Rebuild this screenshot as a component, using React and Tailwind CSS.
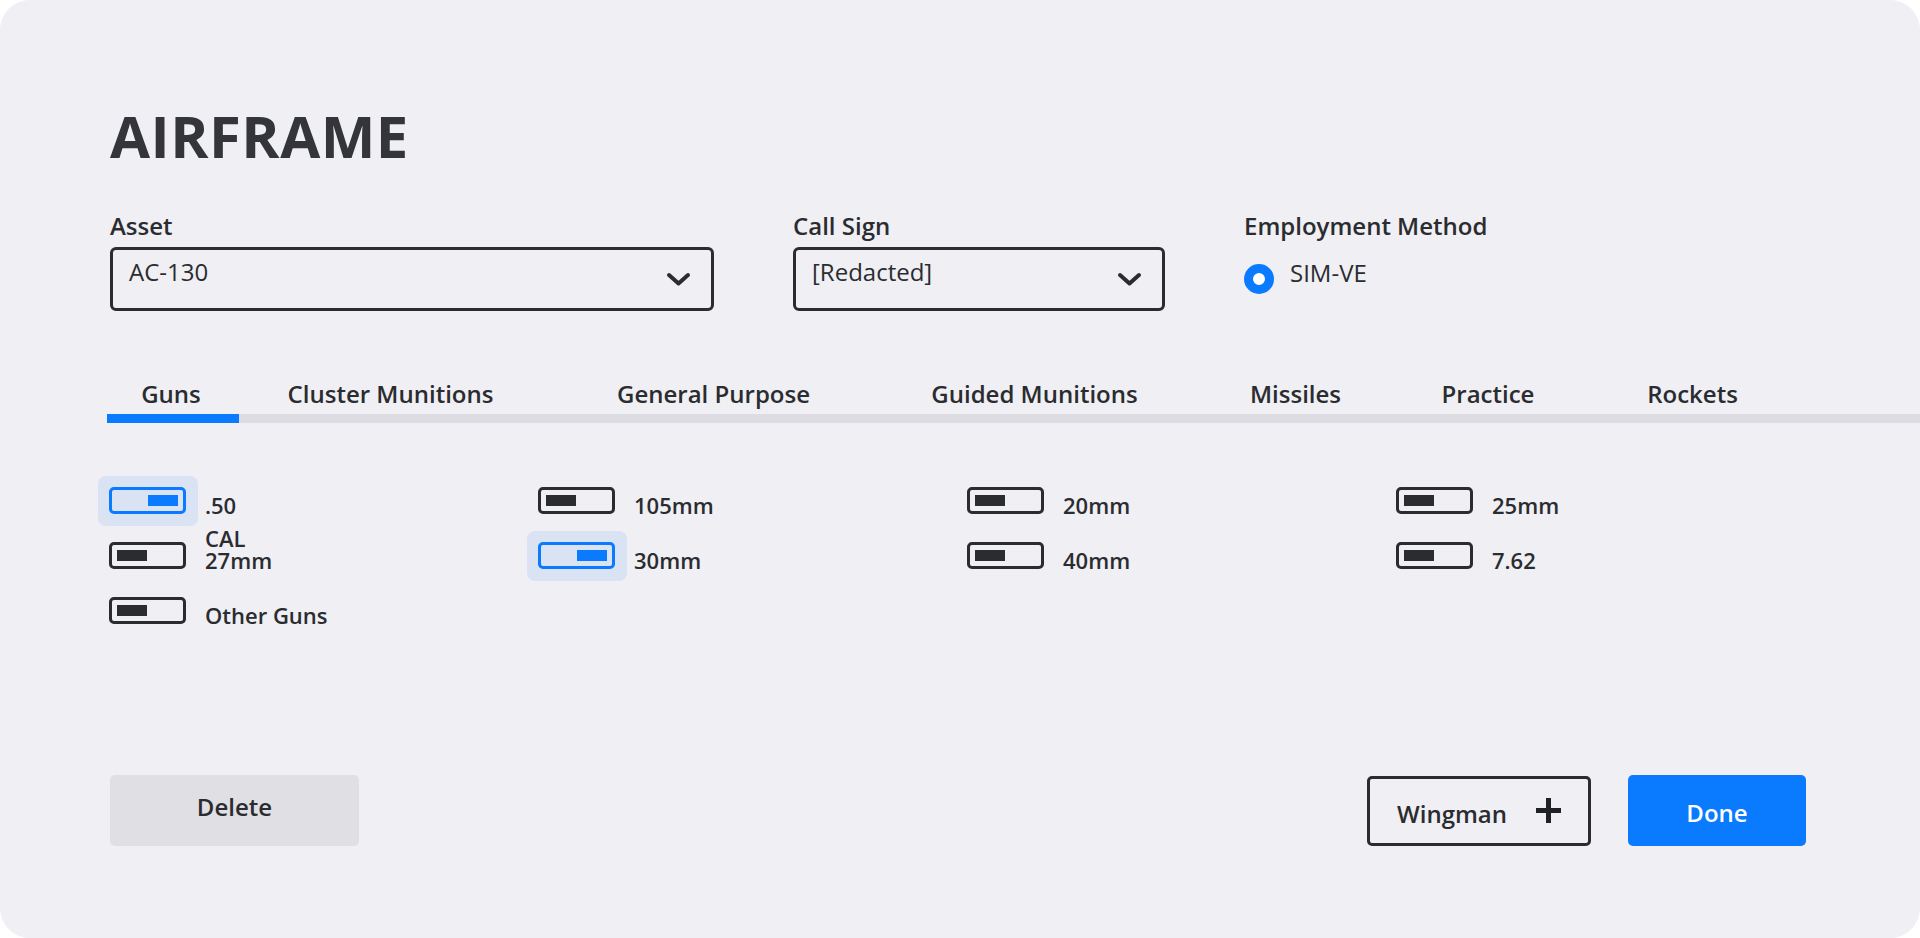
import { useState } from "react";

const TABS = [
    { label: "Guns", w: "w-[132px]" },
    { label: "Cluster Munitions", w: "w-[307px]" },
    { label: "General Purpose", w: "w-[339px]" },
    { label: "Guided Munitions", w: "w-[303px]" },
    { label: "Missiles", w: "w-[219px]" },
    { label: "Practice", w: "w-[166px]" },
    { label: "Rockets", w: "w-[243px]" },
];

const COLUMNS = [
    [
        { label: ".50", on: true },
        { label: ["CAL", "27mm"], on: false },
        { label: "Other Guns", on: false },
    ],
    [
        { label: "105mm", on: false },
        { label: "30mm", on: true },
    ],
    [
        { label: "20mm", on: false },
        { label: "40mm", on: false },
    ],
    [
        { label: "25mm", on: false },
        { label: "7.62", on: false },
    ],
];

const Chevron = () => (
    <svg width="25" height="15" viewBox="0 0 25 15" fill="none">
        <path d="M3 3 L12.5 11.5 L22 3" stroke="#2a2c30" strokeWidth="4" strokeLinecap="round" strokeLinejoin="round" />
    </svg>
);

const Select = ({ value, width }) => (
    <div className={`flex h-[64px] ${width} items-center justify-between rounded-[6px] border-[3px] border-[#2a2c30] pl-[16px] pr-[20px]`}>
        <span className="mt-[10px] self-start text-[24px] leading-none text-[#2a2c30]">{value}</span>
        <Chevron />
    </div>
);

const Toggle = ({ item }) => (
    <div className="flex h-[50px] items-end">
        <div className={`rounded-[8px] pb-[12px] pl-[11px] pr-[12px] pt-[11px] ${item.on ? "bg-[#d9e3f4]" : ""}`}>
            <div className={`flex h-[27px] w-[77px] items-center rounded-[5px] border-[3px] px-[5px] ${item.on ? "justify-end border-[#0a7aff]" : "justify-start border-[#2a2c30]"}`}>
                <div className={`h-[11px] w-[30px] ${item.on ? "bg-[#0a7aff]" : "bg-[#2a2c30]"}`} />
            </div>
        </div>
        <span className="mb-[10px] ml-[7px] text-[22px] font-semibold leading-[22px] text-[#2a2c30]">
            {Array.isArray(item.label) ? (
                <>
                    {item.label[0]}
                    <br />
                    {item.label[1]}
                </>
            ) : (
                item.label
            )}
        </span>
    </div>
);

const App = () => {
    const [tab] = useState(0);
    return (
        <div className="h-[938px] w-full bg-white" style={{ fontFamily: '"Open Sans", "Liberation Sans", sans-serif' }}>
            <div className="flex h-full w-full flex-col overflow-hidden rounded-[30px] bg-[#efeff4] pl-[110px] pt-[107px] text-[#2a2c30]">
                {/* Titre */}
                <h1 className="text-[58px] font-bold leading-none tracking-[0.5px] text-[#33353a]">AIRFRAME</h1>

                {/* Asset / Call Sign / Employment */}
                <div className="mt-[49px] flex gap-[79px]">
                    <div className="flex flex-col">
                        <span className="text-[24px] font-semibold leading-none">Asset</span>
                        <div className="mt-[9px]">
                            <Select value="AC-130" width="w-[604px]" />
                        </div>
                    </div>
                    <div className="flex flex-col">
                        <span className="text-[24px] font-semibold leading-none">Call Sign</span>
                        <div className="mt-[9px]">
                            <Select value="[Redacted]" width="w-[372px]" />
                        </div>
                    </div>
                    <div className="flex flex-col">
                        <span className="text-[24px] font-semibold leading-none">Employment Method</span>
                        <div className="mt-[9px] flex items-start gap-[16px] pt-[14px]">
                            <div className="mt-[3px] h-[30px] w-[30px] rounded-full border-[9px] border-[#0a7aff] bg-white" />
                            <span className="text-[24px] leading-none">SIM-VE</span>
                        </div>
                    </div>
                </div>

                {/* Tabs */}
                <div className="-ml-[3px] mt-[71px] flex">
                    {TABS.map((t, i) => (
                        <div key={t.label} className={`flex shrink-0 flex-col ${t.w}`}>
                            <span className="pb-[8px] pr-[4px] text-center text-[24px] font-semibold leading-none">{t.label}</span>
                            <div className={`h-[9px] w-full ${i === tab ? "bg-[#0a7aff]" : "bg-[#dcdce2]"}`} />
                        </div>
                    ))}
                    <div className="flex flex-1 flex-col justify-end">
                        <div className="h-[9px] w-full bg-[#dcdce2]" />
                    </div>
                </div>

                {/* Options */}
                <div className="-ml-[12px] mt-[53px] grid grid-cols-[429px_429px_429px_429px]">
                    {COLUMNS.map((col, ci) => (
                        <div key={ci} className="flex flex-col gap-[5px]">
                            {col.map((item, ii) => (
                                <Toggle key={ii} item={item} />
                            ))}
                        </div>
                    ))}
                </div>

                {/* Actions */}
                <div className="mt-[139px] flex items-center justify-between pr-[114px]">
                    <button className="flex h-[71px] w-[249px] items-center justify-center rounded-[5px] bg-[#dfdfe4] pb-[7px] text-[24px] font-semibold text-[#2a2c30]">
                        Delete
                    </button>
                    <div className="flex items-center gap-[37px]">
                        <button className="flex h-[70px] w-[224px] items-center justify-center gap-[29px] rounded-[5px] border-[3px] border-[#2a2c30] text-[24px] font-semibold text-[#2a2c30]">
                            <span className="mt-[7px]">Wingman</span>
                            <svg width="25" height="25" viewBox="0 0 25 25">
                                <rect x="10" y="0" width="5" height="25" fill="#1f2125" />
                                <rect x="0" y="10" width="25" height="5" fill="#1f2125" />
                            </svg>
                        </button>
                        <button className="flex h-[71px] w-[178px] items-center justify-center rounded-[5px] bg-[#0a7aff] pt-[4px] text-[24px] font-semibold text-white">
                            Done
                        </button>
                    </div>
                </div>
            </div>
        </div>
    );
};

export default App;
